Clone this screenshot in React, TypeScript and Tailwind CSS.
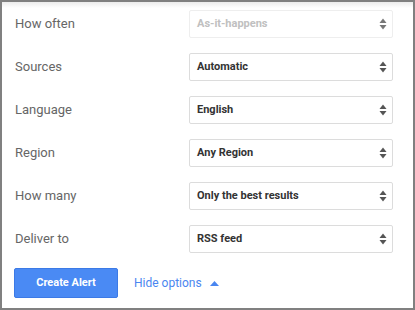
import React from 'react';

const rows = [
    { label: 'How often', value: 'As-it-happens', disabled: true },
    { label: 'Sources', value: 'Automatic' },
    { label: 'Language', value: 'English' },
    { label: 'Region', value: 'Any Region' },
    { label: 'How many', value: 'Only the best results' },
    { label: 'Deliver to', value: 'RSS feed' },
];

const Arrows = ({ dim }: { dim?: boolean }) => (
    <svg width="8" height="12" viewBox="0 0 8 12" className={dim ? 'text-[#777]' : 'text-[#555]'}>
        <path d="M4 0.5 L7.5 5 L0.5 5 Z" fill="currentColor" />
        <path d="M4 11.5 L7.5 7 L0.5 7 Z" fill="currentColor" />
    </svg>
);

export default function App() {
    return (
        <div
            className="w-[415px] h-[310px] border-2 border-[#808080] bg-white overflow-hidden"
            style={{ fontFamily: 'Roboto, Arial, sans-serif' }}
        >
            <div className="h-[6px] bg-gradient-to-b from-[#ececec] to-white" />
            <div className="pl-[12px] pr-[20px] pt-[2px] flex flex-col gap-[15px]">
                {rows.map((r) => (
                    <div key={r.label} className="flex items-center h-[28px]">
                        <div className="w-[175px] text-[13px] text-[#666] pl-[1px]">{r.label}</div>
                        <div
                            className={`flex-1 h-[28px] flex items-center justify-between pl-[7px] pr-[5px] rounded-[2px] border ${r.disabled ? 'border-[#eee]' : 'border-[#dcdcdc]'}`}
                        >
                            <span className={`text-[11px] font-bold ${r.disabled ? 'text-[#c0c0c0]' : 'text-[#333]'}`}>{r.value}</span>
                            <Arrows dim={r.disabled} />
                        </div>
                    </div>
                ))}
                <div className="flex items-center">
                    <button className="w-[104px] h-[30px] rounded-[2px] bg-[#4a8af4] border border-[#3c7ae6] text-white text-[11px] font-bold">
                        Create Alert
                    </button>
                    <span className="ml-[16px] text-[12px] text-[#4a86f0]">Hide options</span>
                    <svg width="9" height="5" viewBox="0 0 9 5" className="ml-[8px]">
                        <path d="M4.5 0 L9 5 L0 5 Z" fill="#4a86f0" />
                    </svg>
                </div>
            </div>
        </div>
    );
}
